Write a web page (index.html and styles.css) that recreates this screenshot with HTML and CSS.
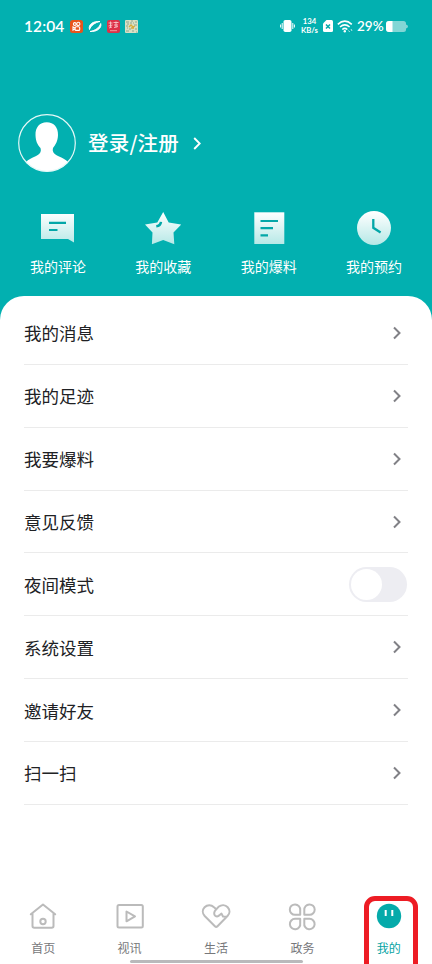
FILE: index.html
```html
<!DOCTYPE html>
<html lang="zh-CN">
<head>
<meta charset="utf-8">
<title>我的</title>
<link rel="stylesheet" href="styles.css">
</head>
<body>
<div class="app">
  <header class="header">
    <div class="status">
      <span class="clock">12:04</span>
      <div class="notices">
        <svg width="13" height="13" viewBox="0 0 13 13"><rect width="13" height="13" rx="2.500" fill="#e8541c"/><g fill="none" stroke="#fff" stroke-width="1.1"><circle cx="4.800" cy="4" r="1.400"/><circle cx="8.300" cy="3.900" r="1.600"/><rect x="5.100" y="6.700" width="4.600" height="3.700" rx="1"/><path d="M5 8L3 7v3l2-1"/></g></svg>
        <svg width="14" height="13" viewBox="0 0 14 13"><path d="M1.500 9.500C0 4.500 5 1 12 1.500C7 2.500 3 5.500 1.500 9.500z" fill="#fff" stroke="#fff" stroke-width="1"/><path d="M12.700 3.500C14 8 9 12 2 11.500C7.500 10.500 11.500 7.500 12.700 3.500z" fill="#fff" stroke="#fff" stroke-width="1"/></svg>
        <svg width="13" height="13" viewBox="0 0 13 13"><rect width="13" height="13" rx="2" fill="#dd3148"/><path d="M1.500 3h4M3.500 1.500v6M1.500 6l4-1M6.500 2.500h5M7 5h4M9 1.500v6M7 7.500l4-1M2 8l3-1" stroke="#f9c4c8" stroke-width=".9"/><path d="M3 10.700h7" stroke="#f09aa0" stroke-width="1"/></svg>
        <svg width="13" height="13" viewBox="0 0 13 13"><rect width="13" height="13" rx="1" fill="#d9dfc4"/><path d="M1 2h3M6 1h2M10 2h2M2 4h2M5 3h2M9 5h3M1 6h2M4 9h2M1 11h3M7 11h2M10 9h2M11 12h1M8 3h1M2 8h1" stroke="#8fa58d" stroke-width="1.200"/><path d="M4 7l2-2 2 2 2-1M6 8h3" fill="none" stroke="#d7ab3c" stroke-width="1.300"/></svg>
      </div>
      <div class="signals">
        <svg class="vibrate" width="15" height="14" viewBox="0 0 15 14"><rect x="3.500" y="1" width="8" height="12" rx="1.800" fill="#fff"/><path d="M2.200 4v6M12.800 4v6M.6 5.500v3M14.400 5.500v3" stroke="#fff" stroke-width="1"/></svg>
        <div class="speed"><span>134</span><span>KB/s</span></div>
        <svg class="sim" width="10" height="12" viewBox="0 0 10 12"><path d="M3.500 0H8.500Q10 0 10 1.500V10.500Q10 12 8.500 12H1.500Q0 12 0 10.500V3.500z" fill="#fff"/><path d="M3 4.500l4 4M7 4.500l-4 4" stroke="#02a9aa" stroke-width="1.500"/></svg>
        <svg class="wifi" width="16" height="13" viewBox="0 0 16 13"><g fill="none" stroke="#fff" stroke-width="1.600"><path d="M.8 4.300Q7.800-2 14.800 4.300"/><path d="M3 7Q7.800 2.700 12.600 7"/><path d="M5.300 9.500Q7.800 7.300 10.300 9.500"/></g><circle cx="7.800" cy="11.200" r="1.200" fill="#fff"/><path d="M11.500 10.500l1.200 1.500M14 9l1 2" stroke="#b8e8e7"/></svg>
        <span class="percent">29%</span>
        <svg class="battery" width="22" height="11" viewBox="0 0 22 11"><path d="M3 0H17.500Q20 0 20 2.500V3.500Q22 4 22 5.500T20 7.500V8.500Q20 11 17.500 11H3Q0 11 0 8V3Q0 0 3 0z" fill="#82d6d5"/><path d="M3 0H6.500V11H3Q0 11 0 8V3Q0 0 3 0z" fill="#fff"/></svg>
      </div>
    </div>

    <div class="profile">
      <svg class="avatar" width="58" height="58" viewBox="0 0 58 58"><defs><clipPath id="face"><circle cx="29" cy="29" r="28.500"/></clipPath></defs><path clip-path="url(#face)" d="M28.700 8.300C36 8.300 40.200 13.500 40 21C39.800 27.500 37.500 30.500 35 34C34 37 35.500 39.500 39 41.500C45 44.500 47 45 50.500 48.500V58H7.500V48.500C11 45 13.500 44.500 19 41.500C22.500 39.500 23.500 37 22.500 34C19.500 30.500 17.700 27.500 17.500 21C17.300 13.500 21.500 8.300 28.700 8.300z" fill="#fff"/><circle cx="29" cy="29" r="28.300" fill="none" stroke="#e4f8f7" stroke-width="1.200"/></svg>
      <span class="login">登录/注册</span>
      <svg class="login-arrow" width="8" height="13" viewBox="0 0 8 13"><path d="M1.200 1L6.700 6.500 1.200 12" fill="none" stroke="#fff" stroke-width="1.900"/></svg>
    </div>

    <nav class="shortcuts">
      <a class="shortcut"><svg width="36" height="36" viewBox="0 0 36 36"><defs><linearGradient id="fade" gradientUnits="userSpaceOnUse" x1="0" y1="2" x2="0" y2="35"><stop offset="0" stop-color="#fff"/><stop offset="1" stop-color="#b5e8e6"/></linearGradient></defs><path d="M1 4H34V32.500L28 29H1z" fill="url(#fade)"/><path d="M9 12.800H26M9 20H17.500" stroke="#03a7a8" stroke-width="2.200"/></svg><span>我的评论</span></a>
      <a class="shortcut"><svg width="36" height="36" viewBox="0 0 36 36"><path d="M18.200 2L23.700 12.500 36.300 14.500 28.500 22.500 29.300 34.300 18.200 30 6.900 34.300 7.500 22.500 0 14.500 12.300 12.500z" fill="url(#fade)"/><path d="M11.300 16.300Q15.500 15.800 16 11.800" fill="none" stroke="#03a7a8" stroke-width="2.500"/></svg><span>我的收藏</span></a>
      <a class="shortcut"><svg width="36" height="36" viewBox="0 0 36 36"><path d="M3.300 2.300H33.300V34H3.300z" fill="url(#fade)"/><path d="M9.500 11H27M9.500 18.200H22M9.500 25.400H17" stroke="#03a7a8" stroke-width="2.200"/></svg><span>我的爆料</span></a>
      <a class="shortcut"><svg width="36" height="36" viewBox="0 0 36 36"><circle cx="18" cy="18" r="17" fill="url(#fade)"/><path d="M17.300 9V17.800L24.600 22.500" fill="none" stroke="#03a7a8" stroke-width="2.300"/></svg><span>我的预约</span></a>
    </nav>
  </header>

  <main class="panel">
    <div class="row"><span>我的消息</span><svg class="arrow" viewBox="0 0 8 14"><path d="M1 1.500L6.500 7 1 12.500"/></svg></div>
    <div class="row"><span>我的足迹</span><svg class="arrow" viewBox="0 0 8 14"><path d="M1 1.500L6.500 7 1 12.500"/></svg></div>
    <div class="row"><span>我要爆料</span><svg class="arrow" viewBox="0 0 8 14"><path d="M1 1.500L6.500 7 1 12.500"/></svg></div>
    <div class="row"><span>意见反馈</span><svg class="arrow" viewBox="0 0 8 14"><path d="M1 1.500L6.500 7 1 12.500"/></svg></div>
    <div class="row"><span>夜间模式</span><div class="switch"><div class="knob"></div></div></div>
    <div class="row"><span>系统设置</span><svg class="arrow" viewBox="0 0 8 14"><path d="M1 1.500L6.500 7 1 12.500"/></svg></div>
    <div class="row"><span>邀请好友</span><svg class="arrow" viewBox="0 0 8 14"><path d="M1 1.500L6.500 7 1 12.500"/></svg></div>
    <div class="row"><span>扫一扫</span><svg class="arrow" viewBox="0 0 8 14"><path d="M1 1.500L6.500 7 1 12.500"/></svg></div>
  </main>

  <footer class="tabs">
    <a class="tab"><svg viewBox="0 0 30 30"><path d="M2.800 13.300L15 3.500 27.200 13.300M4.500 12.500V25Q4.500 26.800 6.300 26.800H23.700Q25.500 26.800 25.500 25V12.500"/><circle cx="15" cy="20.500" r="2.700"/></svg><span>首页</span></a>
    <a class="tab"><svg viewBox="0 0 30 30"><rect x="2.500" y="4" width="25.300" height="22.500" rx="1.500"/><path d="M11.500 10.500V20.300L20 15.400z"/></svg><span>视讯</span></a>
    <a class="tab"><svg viewBox="0 0 30 30"><path d="M17.500 5.800C20.500 3.500 24.300 3.600 26.700 6.200C29.200 9 29 12.500 26.500 15L16.500 25.200Q15.200 26.500 13.900 25.200L3.700 15C1.200 12.300 1.200 8.700 3.600 6.200C6.300 3.500 10.300 3.600 13 6.200L15 7.900M17.500 5.800L14.800 8.800C12.700 11 12.800 13.500 14.200 14.700C15.700 15.900 17.500 15.300 18.700 14L20.500 12.600 22 15.500 25.800 15.700"/></svg><span>生活</span></a>
    <a class="tab"><svg viewBox="0 0 30 30"><path d="M13.200 13.800V8.900A5.200 5.200 0 1 0 8 13.800zM17.300 13.800V8.900A5.200 5.200 0 1 1 22.500 13.800zM13.200 17.800V22.100A5.200 5.200 0 1 1 8 17.800zM17.300 17.800V22.100A5.200 5.200 0 1 0 22.500 17.800z"/></svg><span>政务</span></a>
    <a class="tab active"><svg viewBox="0 0 30 30"><circle class="disc" cx="15" cy="15" r="12.200"/><path class="eyes" d="M11.700 9V15M18.300 9V15"/></svg><span>我的</span><div class="marker"></div></a>
  </footer>
  <div class="home-bar"></div>
</div>
</body>
</html>
```
FILE: styles.css
```css
* { box-sizing: border-box; }
body {
  margin: 0;
  background: #fff;
  font-family: "Noto Sans CJK SC", sans-serif;
}
svg { display: block; flex: none; }
.app {
  width: 432px;
  height: 964px;
  overflow: hidden;
  display: flex;
  flex-direction: column;
}
.header {
  height: 320px;
  flex: none;
  background: #02b0b0;
  color: #fff;
}
.status {
  height: 52px;
  padding: 0 24px;
  display: flex;
  align-items: center;
  font-family: Lato, sans-serif;
}
.clock {
  width: 45.500px;
  padding-bottom: 1px;
  font-size: 15.500px;
  font-weight: 600;
  letter-spacing: 0.100px;
  white-space: nowrap;
}
.notices { display: flex; align-items: center; gap: 5px; }
.signals { margin-left: auto; display: flex; align-items: center; }
.speed {
  display: flex;
  flex-direction: column;
  align-items: center;
  width: 19px;
  margin: 0 4px 0 5px;
  font-size: 7.700px;
  line-height: 9px;
  font-weight: 700;
  white-space: nowrap;
}
.wifi { margin-left: 4px; }
.percent { width: 30px; padding-left: 4px; padding-bottom: 1px; font-size: 13.500px; font-weight: 600; }
.battery { margin-left: 3px; }
.profile { height: 58px; margin: 62px 0 0 18px; display: flex; align-items: center; }
.login {
  width: 92px;
  margin-left: 12px;
  padding-bottom: 2px;
  font-size: 20.500px;
  font-weight: 500;
  line-height: 28px;
  letter-spacing: 0.200px;
  white-space: nowrap;
}
.login-arrow { margin-left: 13px; }
.shortcuts {
  display: grid;
  grid-template-columns: repeat(4, 1fr);
  padding: 0 5.200px;
  margin-top: 38px;
}
.shortcut {
  display: flex;
  flex-direction: column;
  align-items: center;
  font-size: 14px;
  line-height: 20px;
  gap: 10px;
}
.panel {
  flex: 1;
  margin-top: -24px;
  padding: 6px 24px 0;
  background: #fff;
  border-radius: 24px 24px 0 0;
}
.row {
  height: 62.860px;
  display: flex;
  align-items: center;
  justify-content: space-between;
  border-bottom: 1px solid #ebebeb;
  color: #202124;
  font-size: 17.500px;
}
.arrow {
  width: 8px;
  height: 14px;
  margin-right: 7px;
  fill: none;
  stroke: #818186;
  stroke-width: 2;
}
.switch {
  width: 58px;
  height: 35px;
  margin-right: 1px;
  padding: 2px;
  border-radius: 18px;
  background: #ededf2;
}
.knob { width: 31px; height: 31px; border-radius: 50%; background: #fff; }
.tabs {
  height: 59px;
  flex: none;
  display: grid;
  grid-template-columns: repeat(5, 1fr);
}
.tab {
  position: relative;
  display: flex;
  flex-direction: column;
  align-items: center;
  color: #77787b;
  font-size: 12px;
  line-height: 18px;
  gap: 8px;
}
.tab svg {
  width: 30px;
  height: 30px;
  fill: none;
  stroke: #bbb;
  stroke-width: 2;
  stroke-linejoin: round;
  stroke-linecap: round;
}
.tab.active { color: #05a3a3; }
.tab .disc { fill: #05aaaa; stroke: none; }
.tab .eyes { stroke: #fff; stroke-width: 2; stroke-linecap: butt; }
.home-bar {
  flex: none;
  width: 173px;
  height: 3px;
  margin: 0 auto 1px;
  border-radius: 2px;
  background: #b9b9bb;
}
.marker {
  position: absolute;
  top: -5px;
  left: 18px;
  width: 54px;
  height: 80px;
  border: 5px solid #ed1c24;
  border-radius: 11px;
}
```
